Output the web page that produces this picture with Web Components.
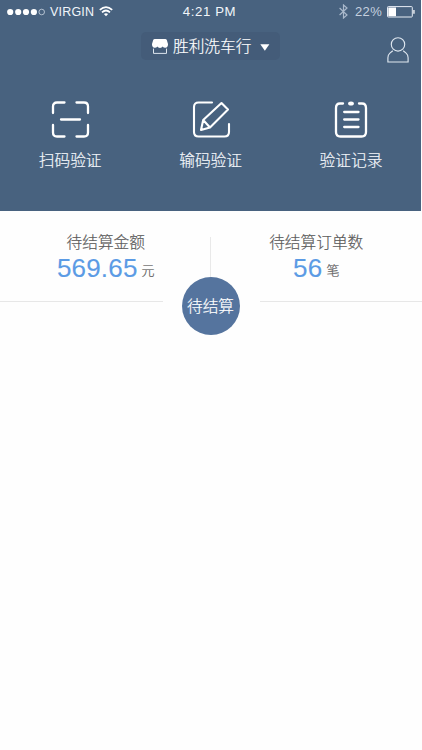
<!DOCTYPE html>
<html lang="zh-CN">
<head>
<meta charset="utf-8">
<title>胜利洗车行</title>
<style>
html,body{margin:0;height:100%;background:#fefefe}
body{font-family:"Liberation Sans","Noto Sans CJK SC",sans-serif;font-weight:300;overflow:hidden}
</style>
</head>
<body>
<settlement-page></settlement-page>
<script>
function define(name, html) {
  const template = document.createElement('template');
  template.innerHTML = html;
  customElements.define(name, class extends HTMLElement {
    constructor() {
      super();
      this.attachShadow({mode: 'open'}).append(template.content.cloneNode(true));
    }
  });
}

define('status-bar', `
<style>
:host{display:grid;grid-template-columns:1fr auto 1fr;align-items:center;height:23px;padding:0 6px 0 7px;color:#f1f5fa;font-size:13px;line-height:23px;white-space:nowrap}
svg{display:block;flex:none}
.left,.right{display:flex;align-items:center}
.right{justify-content:flex-end}
.carrier{margin-left:4px;padding-top:1px;line-height:22px;letter-spacing:.2px;font-size:12.5px}
.wifi{margin-left:5px}
.time{letter-spacing:.6px;font-size:13.2px;margin-right:3px}
.pct{margin:0 5px 0 7px;color:#c5d0df;letter-spacing:.3px}
</style>
<div class="left">
<svg width="39" height="8" viewBox="0 0 39 8"><g fill="#fff"><circle cx="3.2" cy="4" r="3.1"/><circle cx="11.2" cy="4" r="3.1"/><circle cx="19" cy="4" r="3.1"/><circle cx="26.9" cy="4" r="3.1"/></g><circle cx="34.7" cy="4" r="2.8" fill="none" stroke="#dce5ef" stroke-width=".7"/></svg>
<span class="carrier">VIRGIN</span>
<svg class="wifi" width="14" height="11" viewBox="0 0 14 11" fill="none" stroke="#fff" stroke-width="1.7"><path d="M.8 3.9Q7-1.7 13.2 3.9M3 6.3Q7 2.7 11 6.3"/><path d="M4.9 8.1Q7 6.4 9.1 8.1L7 10.3Z" fill="#fff" stroke="none"/></svg>
</div>
<span class="time">4:21 PM</span>
<div class="right">
<svg width="9" height="15" viewBox="0 0 9 15" fill="none" stroke="#aab9cc" stroke-width="1.2"><path d="M.6 4 8 11 4.5 14V1L8 4 .6 11"/></svg>
<span class="pct">22%</span>
<svg width="28" height="12" viewBox="0 0 28 12"><rect x=".5" y=".6" width="24.8" height="10.4" rx=".8" fill="none" stroke="#e7edf5"/><path d="M1.300 1.500H9V10.200H1.300Z" fill="#fff"/><path d="M26.3 4H27.6V7.7H26.3Z" fill="#fff"/></svg>
</div>`);

define('shop-bar', `
<style>
:host{display:grid;grid-template-columns:1fr 139px 1fr;height:42px;padding-top:9px;box-sizing:border-box;color:#fff}
svg{display:block;flex:none}
.shop{grid-column:2;display:flex;align-items:center;height:28px;box-sizing:border-box;padding-left:11px;border-radius:5px;background:#445c79;font-size:15.7px;line-height:28px;white-space:nowrap}
.name{margin:0 9px 0 5px;padding-top:2px;-webkit-text-stroke:.2px}
.arrow{margin-top:2px}
.user{justify-self:end;margin:5px 12px 0 0}
</style>
<div class="shop">
<svg width="16" height="15" viewBox="0 0 16 15"><path d="M2.8 0H13.2Q14.4 0 14.8 1.1L16 5.1Q16.1 8.6 13.4 8.8 11.5 8.9 10.7 7.6 9.8 8.9 8 8.9 6.2 8.9 5.3 7.6 4.5 8.9 2.6 8.8-.1 8.6 0 5.1L1.2 1.1Q1.6 0 2.8 0Z" fill="#fff"/><path d="M1.5 9.6V14.4H14.5V9.6" fill="none" stroke="#dce4ed"/></svg>
<span class="name"><slot></slot></span>
<svg class="arrow" width="10" height="7" viewBox="0 0 10 7"><path d="M.3.3H9.4L4.85 6.8Z" fill="#fff"/></svg>
</div>
<svg class="user" width="22" height="26" viewBox="0 0 22 26" fill="none" stroke="#dfe7f0" stroke-width="1.15"><circle cx="11" cy="7.4" r="6.7"/><path d="M5.8 13.7 2.9 16.1Q.9 17.8.9 20.8V25H21.1V20.8Q21.1 17.8 19.1 16.1L16.2 13.7"/></svg>`);

define('action-item', `
<style>
:host{display:flex;flex-direction:column;align-items:center;color:#f4f7fb;font-size:15.7px;line-height:24px;white-space:nowrap;-webkit-text-stroke:.2px}
::slotted(svg){display:block;width:40px;height:40px;margin-bottom:10px;fill:none;stroke:#fff;stroke-width:2.3;stroke-linecap:round;stroke-linejoin:round}
</style>
<slot name="icon"></slot><span><slot></slot></span>`);

define('action-row', `
<style>
:host{display:grid;grid-template-columns:repeat(3,140.4px);padding-top:34px}
</style><slot></slot>`);

define('page-header', `
<style>
:host{display:block;width:421px;height:211px;background:#48627f}
</style><slot></slot>`);

define('amount-item', `
<style>
:host{display:flex;flex-direction:column;align-items:center;color:#5b5b5b;white-space:nowrap}
.label{font-size:15.7px;line-height:24px;-webkit-text-stroke:.2px}
.value{display:flex;align-items:center;height:28px;line-height:28px;font-size:13px}
.unit{padding-top:3px;-webkit-text-stroke:.2px}
::slotted(b){font-weight:400;font-size:26px;line-height:26px;height:28px;color:#5b9be5;margin-right:4px;-webkit-text-stroke:.12px #5b9be5;letter-spacing:.2px}
</style>
<span class="label"><slot name="label"></slot></span>
<span class="value"><slot name="number"></slot><span class="unit"><slot></slot></span></span>`);

define('settlement-summary', `
<style>
:host{display:grid;grid-template-columns:1fr 58px 1fr;width:421px;height:125px;position:relative}
.item{padding-top:20px}
.one{padding-left:30px}.two{padding-right:28px}
.middle{display:flex;flex-direction:column;align-items:center;padding-top:26px}
.divider{width:1px;height:40px;background:#e9e9e9}
.circle{width:58px;height:58px;border-radius:50%;background:#55749e;color:#fff;font-size:15.7px;line-height:60px;text-align:center;white-space:nowrap;flex:none;-webkit-text-stroke:.2px}
.rule{position:absolute;top:90px;height:1px;background:#e7e7e7}
.l{left:0;width:163px}.r{left:260px;right:-1px}
</style>
<div class="item one"><slot name="amount"></slot></div>
<div class="middle"><div class="divider"></div><div class="circle"><slot></slot></div></div>
<div class="item two"><slot name="orders"></slot></div>
<div class="rule l"></div><div class="rule r"></div>`);

define('settlement-page', `
<style>:host{display:block;width:422px;height:750px;background:#fefefe}</style>
<page-header>
<status-bar></status-bar>
<shop-bar>胜利洗车行</shop-bar>
<action-row>
<action-item><svg slot="icon" viewBox="0 0 40 40"><path d="M14.5 3.5H7Q3 3.5 3 7.5V14M26.5 3.5H34Q38 3.5 38 7.5V14M3 26V33.5Q3 37.500 7 37.500H14.500M38 26V33.500Q38 37.500 34 37.500H26.500M11 20.500H30"/></svg>扫码验证</action-item>
<action-item><svg slot="icon" viewBox="0 0 40 40" style="stroke-width:2.1"><path d="M21 3.500H7.500Q3 3.500 3 8V33Q3 37.500 7.500 37.500H33.500Q38 37.500 38 33V25M10 31 12.200 21 30.500 4 37 10.600 19 28.500ZM12.200 21 19 28.500"/></svg>输码验证</action-item>
<action-item><svg slot="icon" viewBox="0 0 40 40"><path d="M12 4.500H9Q5 4.500 5 9V33Q5 37.500 9.500 37.500H30.500Q35 37.500 35 33V9Q35 4.500 31 4.500H28M13.200 13H27.500M13.200 20.500H27.500M13.200 28H27.500"/><ellipse cx="20" cy="4.500" rx="2.900" ry="2.100" fill="#fff" stroke="none"/></svg>验证记录</action-item>
</action-row>
</page-header>
<settlement-summary>
<amount-item slot="amount"><span slot="label">待结算金额</span><b slot="number">569.65</b>元</amount-item>
<amount-item slot="orders"><span slot="label">待结算订单数</span><b slot="number">56</b>笔</amount-item>
待结算
</settlement-summary>`);
</script>
</body>
</html>
